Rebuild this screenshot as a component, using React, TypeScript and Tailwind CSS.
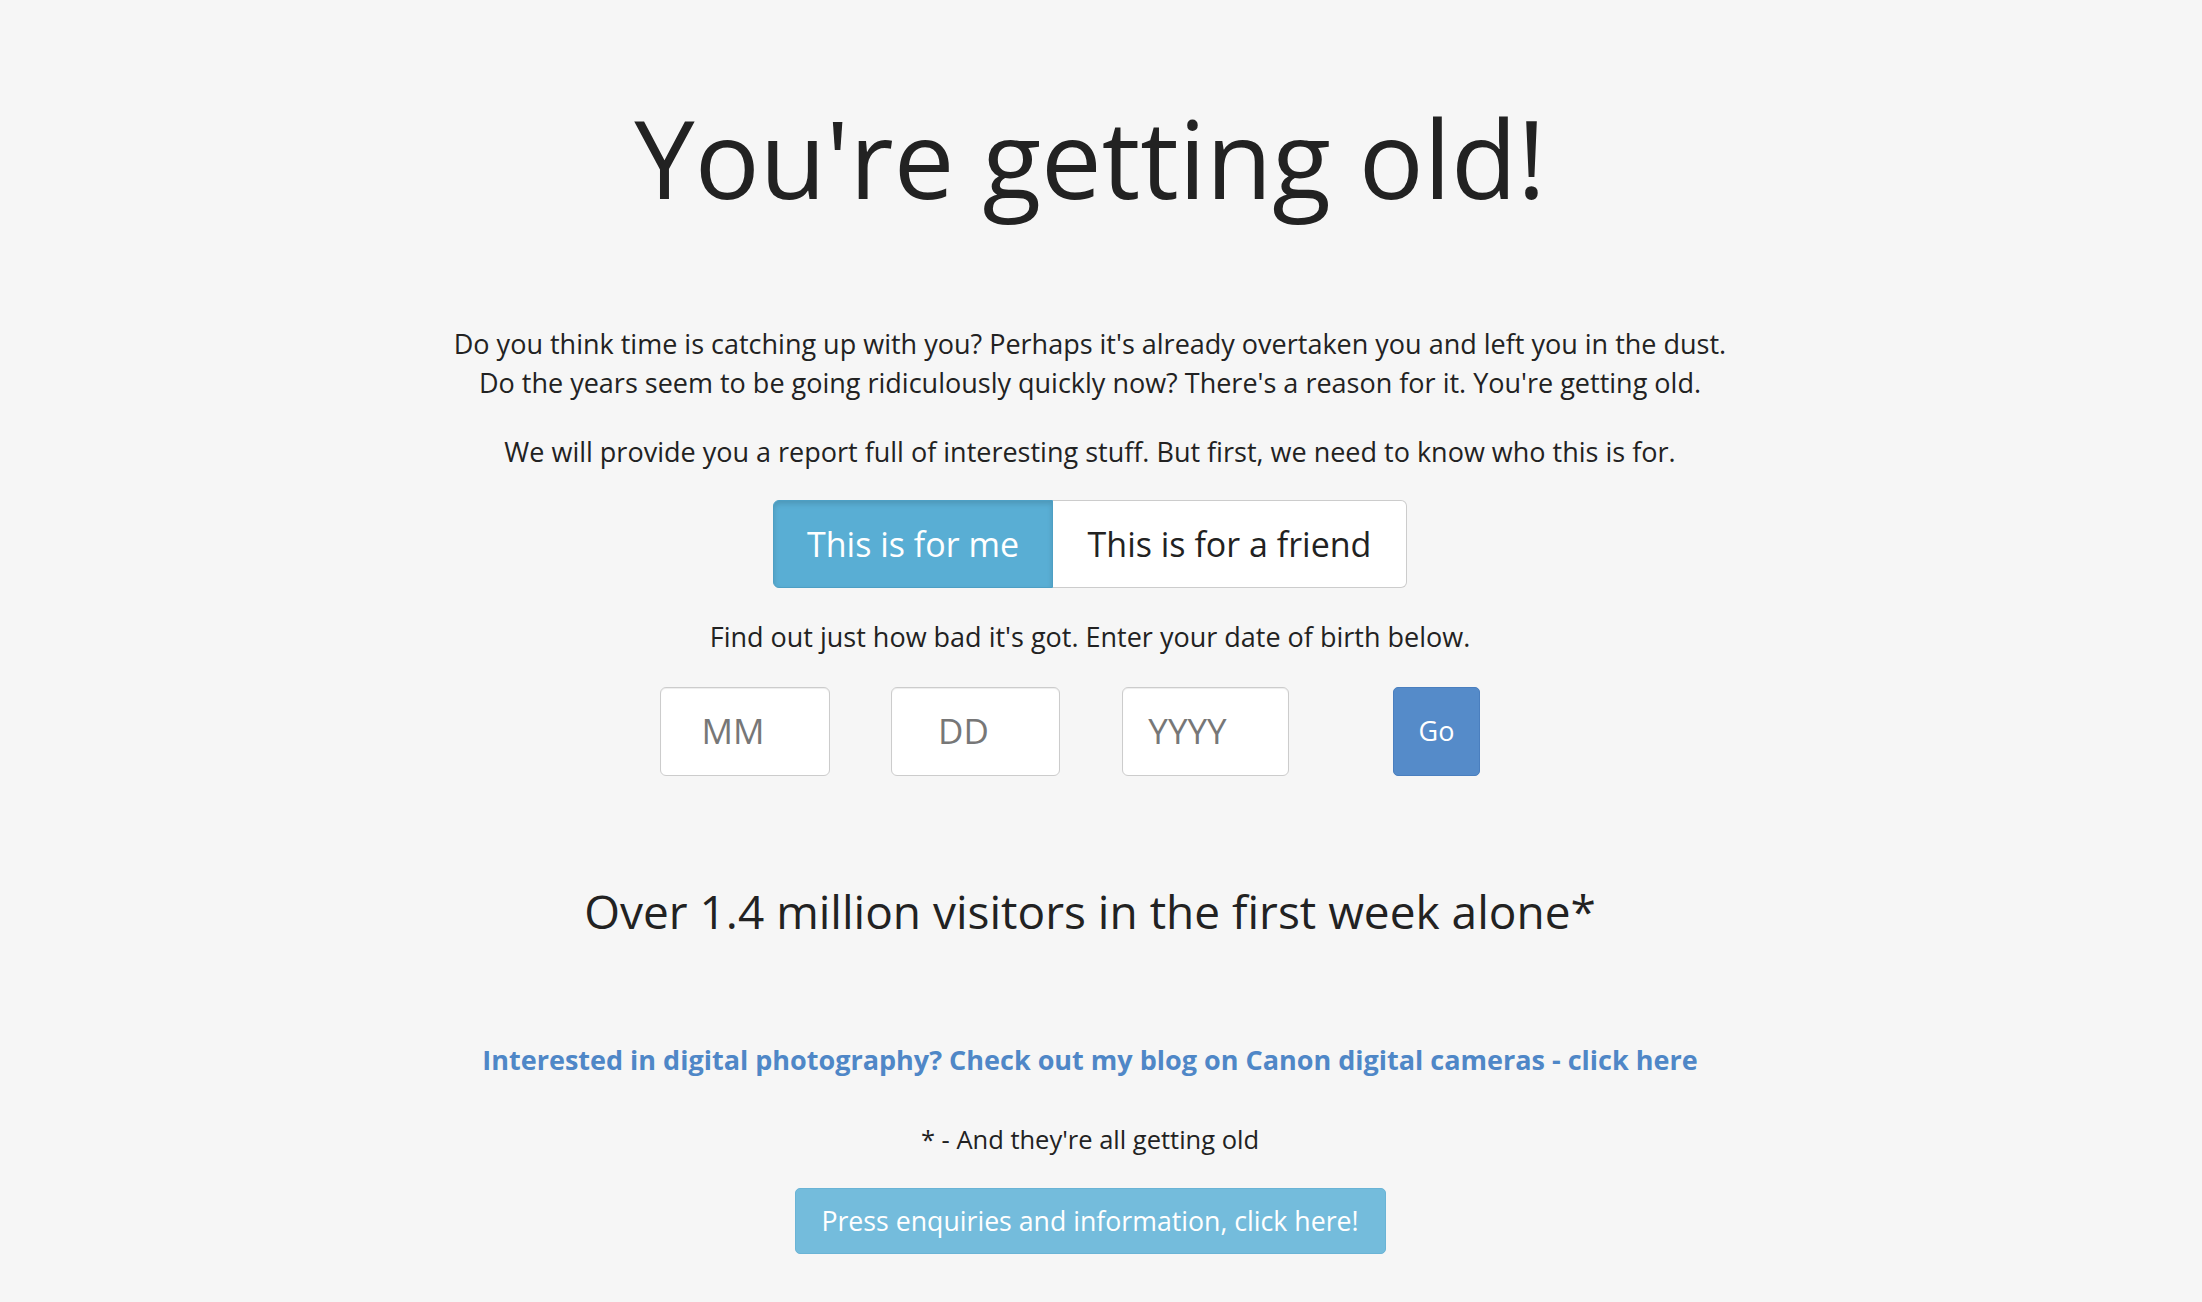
import { useState } from "react"

export default function App() {
  const [forMe, setForMe] = useState(true)

  return (
    <div className="min-h-screen w-full bg-[#f6f6f6] text-[#222] font-['Open_Sans',sans-serif]">
      <div className="flex flex-col items-center pt-[96px] pr-[22px] pb-10 text-center">
        <h1 className="text-[108px] leading-[123px] font-normal text-[#222]">You're getting old!</h1>

        <p className="mt-[105px] text-[27px] leading-[39px] text-[#222]">
          Do you think time is catching up with you? Perhaps it's already overtaken you and left you in the dust.
          <br />
          Do the years seem to be going ridiculously quickly now? There's a reason for it. You're getting old.
        </p>

        <p className="mt-[30px] text-[27px] leading-[39px] text-[#222]">
          We will provide you a report full of interesting stuff. But first, we need to know who this is for.
        </p>

        {/* Who is this for toggle */}
        <div className="mt-[29px] flex h-[88px]">
          <button
            onClick={() => setForMe(true)}
            className={`w-[280px] rounded-l-[6px] border text-[34px] ${
              forMe
                ? "bg-[#59aed4] border-[#4d9fc4] text-white shadow-[inset_0_3px_5px_rgba(0,0,0,0.125)]"
                : "bg-white border-[#ccc] text-[#222]"
            }`}
          >
            This is for me
          </button>
          <button
            onClick={() => setForMe(false)}
            className={`w-[354px] rounded-r-[6px] border border-l-0 text-[34px] ${
              !forMe
                ? "bg-[#59aed4] border-[#4d9fc4] text-white shadow-[inset_0_3px_5px_rgba(0,0,0,0.125)]"
                : "bg-white border-[#ccc] text-[#222]"
            }`}
          >
            This is for a friend
          </button>
        </div>

        <p className="mt-[29px] text-[27px] leading-[39px] text-[#222]">
          Find out just how bad it's got. Enter your date of birth below.
        </p>

        {/* Date of birth */}
        <div className="mt-[31px] mr-[40px] flex h-[89px] items-stretch">
          <input
            placeholder="MM"
            className="w-[170px] rounded-[6px] border border-[#ccc] bg-white pr-6 text-center text-[35px] text-[#555] shadow-[inset_0_1px_1px_rgba(0,0,0,0.075)] outline-none placeholder:text-[#777]"
          />
          <input
            placeholder="DD"
            className="ml-[61px] w-[169px] rounded-[6px] border border-[#ccc] bg-white pr-6 text-center text-[35px] text-[#555] shadow-[inset_0_1px_1px_rgba(0,0,0,0.075)] outline-none placeholder:text-[#777]"
          />
          <input
            placeholder="YYYY"
            className="ml-[62px] w-[167px] rounded-[6px] border border-[#ccc] bg-white pr-9 text-center text-[35px] text-[#555] shadow-[inset_0_1px_1px_rgba(0,0,0,0.075)] outline-none placeholder:text-[#777]"
          />
          <button className="ml-[104px] w-[87px] rounded-[5px] border border-[#4a7fbf] bg-[#558bc9] text-[27px] text-white">
            Go
          </button>
        </div>

        <h2 className="mt-[105px] text-[46px] leading-[60px] font-normal text-[#222]">
          Over 1.4 million visitors in the first week alone*
        </h2>

        <a href="#" className="mt-[99px] text-[27px] leading-[39px] font-bold text-[#4f87c7]">
          Interested in digital photography? Check out my blog on Canon digital cameras - click here
        </a>

        <p className="mt-[41px] text-[25.5px] leading-[39px] text-[#222]">* - And they're all getting old</p>

        <button className="mt-[29px] h-[66px] w-[591px] rounded-[5px] border border-[#6ab4d6] bg-[#74bcdc] text-[26.7px] text-white">
          Press enquiries and information, click here!
        </button>
      </div>
    </div>
  )
}
